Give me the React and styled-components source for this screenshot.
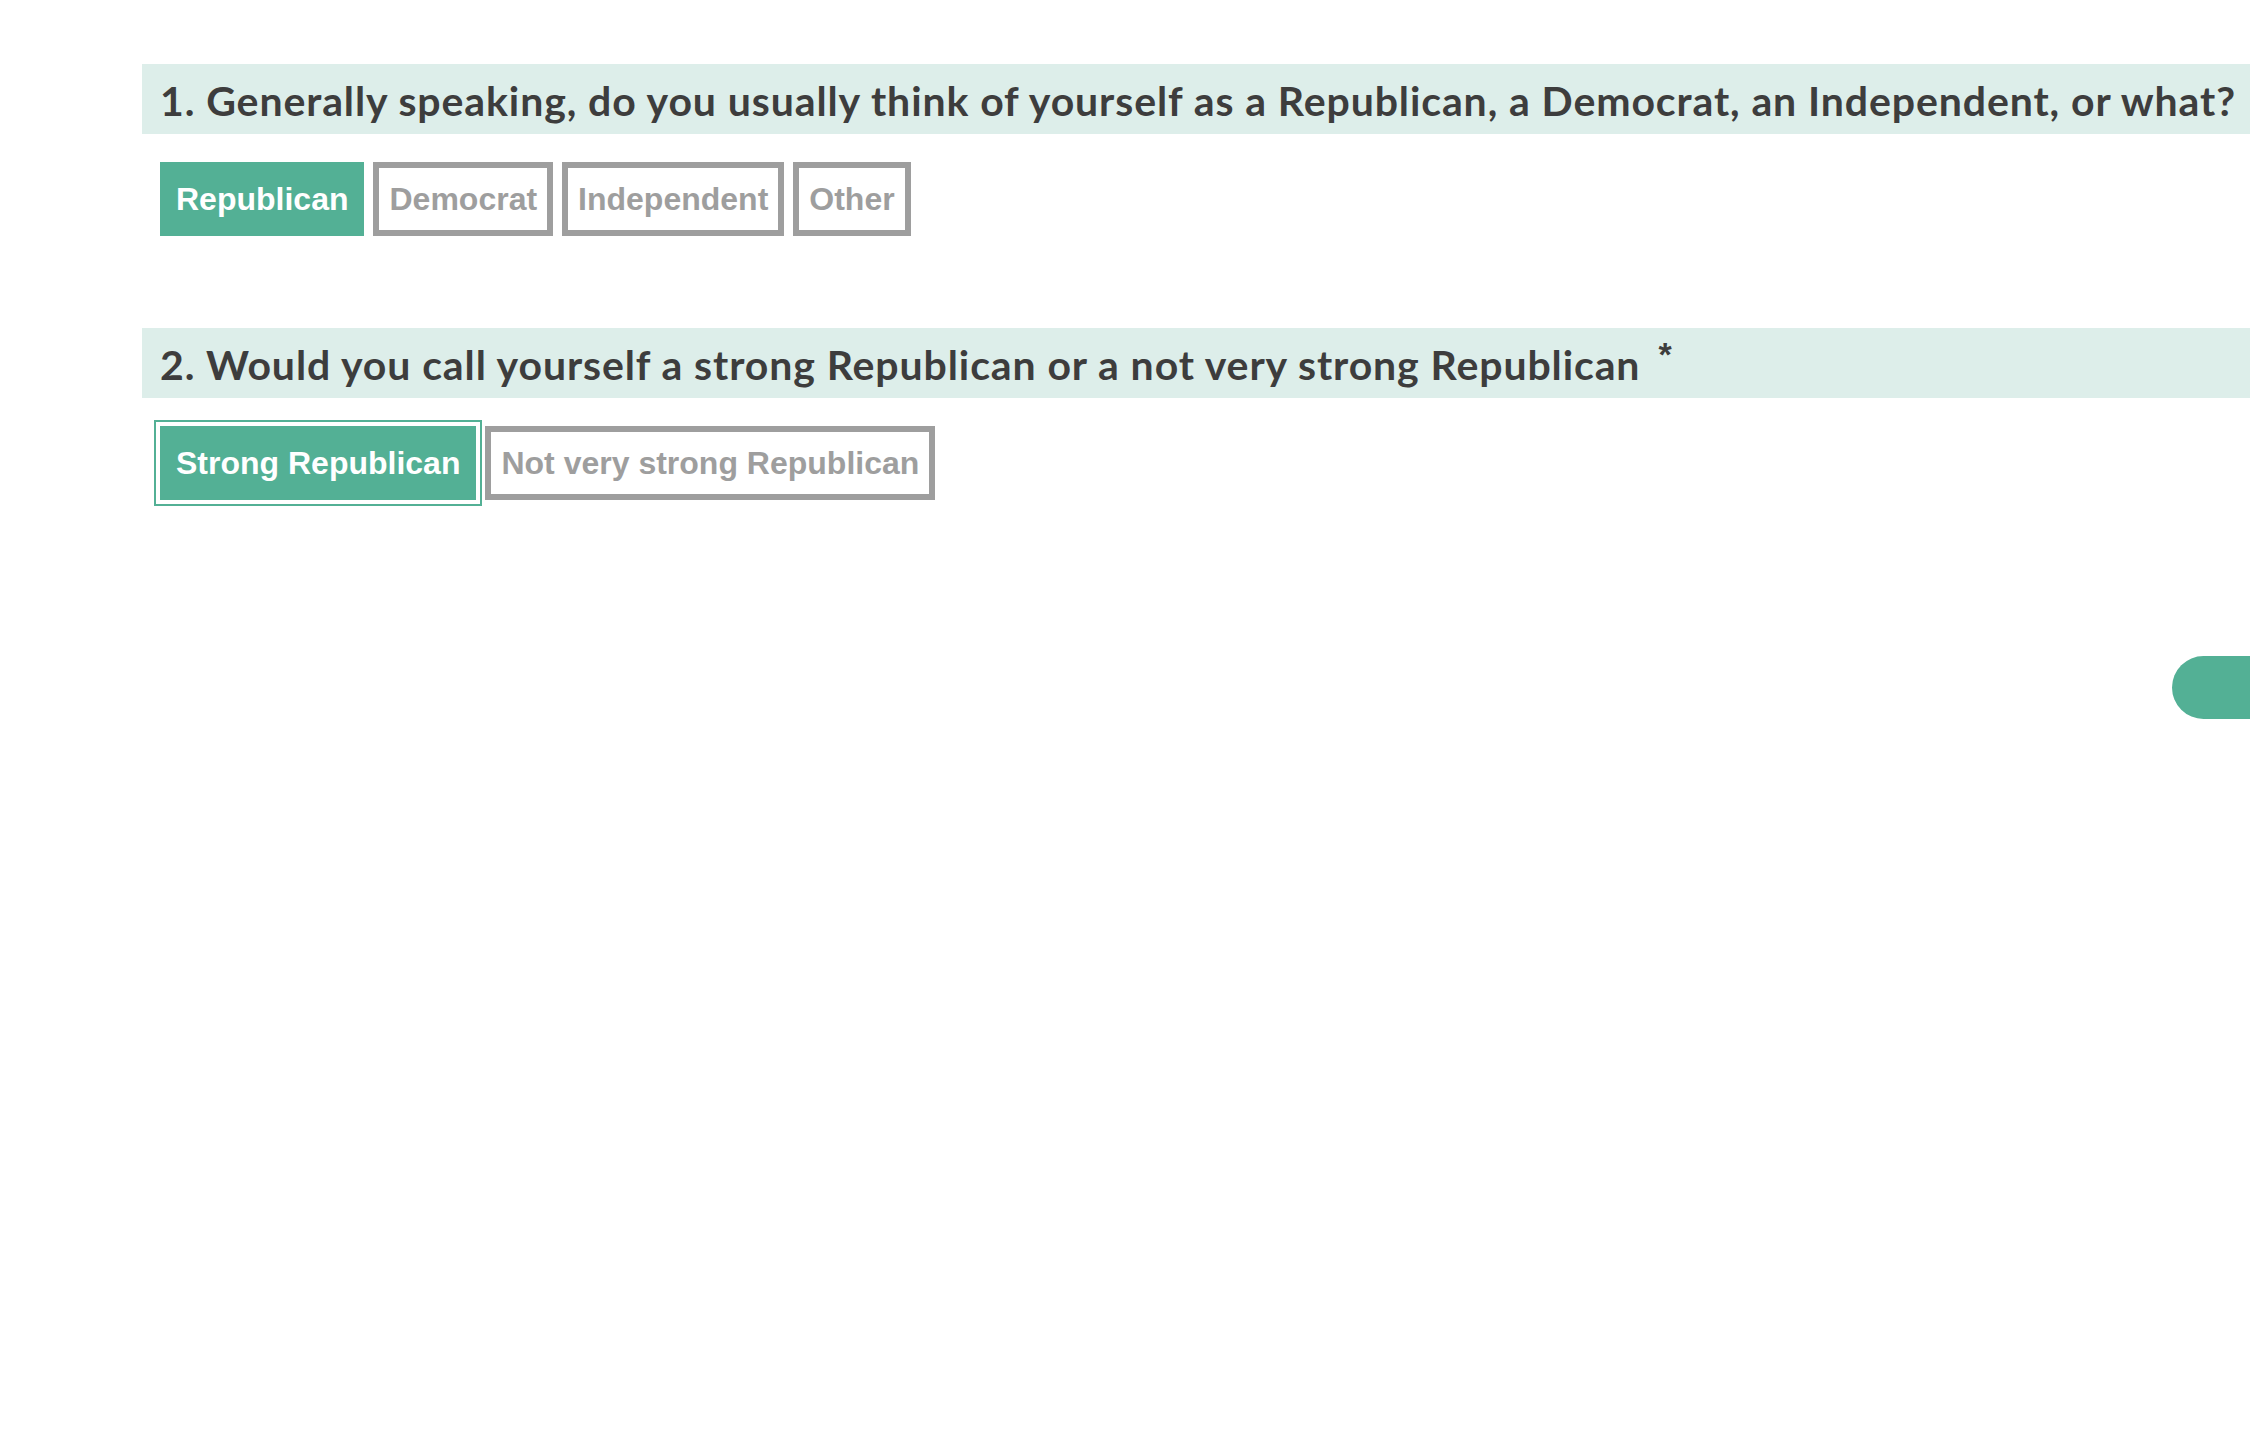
import React, { useState } from 'react';
import styled, { createGlobalStyle } from 'styled-components';

const GlobalStyle = createGlobalStyle`
    html, body {
        margin: 0;
        padding: 0;
        background: #ffffff;
        overflow: hidden;
    }
`;

const questions = [
    {
        id: 1,
        text: 'Generally speaking, do you usually think of yourself as a Republican, a Democrat, an Independent, or what?',
        options: ['Republican', 'Democrat', 'Independent', 'Other'],
        selected: 'Republican',
        required: false,
    },
    {
        id: 2,
        text: 'Would you call yourself a strong Republican or a not very strong Republican',
        options: ['Strong Republican', 'Not very strong Republican'],
        selected: 'Strong Republican',
        focused: 'Strong Republican',
        required: true,
    },
];

const App = () => {
    const [answers, setAnswers] = useState(
        questions.reduce((acc, q) => ({ ...acc, [q.id]: q.selected }), {})
    );

    return (
        <Page>
            <GlobalStyle />
            {questions.map((q) => (
                <Question key={q.id}>
                    <Header>
                        {q.id}. {q.text}
                        {q.required ? <Required>*</Required> : null}
                    </Header>
                    <Options>
                        {q.options.map((opt) => (
                            <Option
                                key={opt}
                                $active={answers[q.id] === opt}
                                $focused={q.focused === opt}
                                onClick={() => setAnswers({ ...answers, [q.id]: opt })}
                            >
                                {opt}
                            </Option>
                        ))}
                    </Options>
                </Question>
            ))}
            <NextTab />
        </Page>
    );
};

const Page = styled.div`
    padding: 64px 0 0 142px;
    min-height: 1376px;
`;

const Question = styled.div`
    & + & {
        margin-top: 92px;
    }
`;

const Header = styled.div`
    display: flex;
    align-items: center;
    height: 70px;
    padding: 2px 18px 0;
    background-color: #ddeeea;
    color: #3d3d3d;
    font-family: Lato, 'Open Sans', sans-serif;
    font-weight: 700;
    font-size: 41px;
    letter-spacing: 0.9px;
    white-space: nowrap;
    box-sizing: border-box;
`;

const Required = styled.span`
    align-self: flex-start;
    margin: 7px 0 0 18px;
    font-family: 'Liberation Sans', Arial, sans-serif;
    font-size: 34px;
    line-height: 1;
`;

const Options = styled.div`
    display: flex;
    gap: 9px;
    margin-top: 28px;
    padding-left: 18px;
`;

const Option = styled.button`
    height: 74px;
    padding: 0 10px;
    box-sizing: border-box;
    border: 6px solid ${(p) => (p.$active ? '#53b095' : '#9e9e9e')};
    background-color: ${(p) => (p.$active ? '#53b095' : '#ffffff')};
    color: ${(p) => (p.$active ? '#ffffff' : '#9e9e9e')};
    font-family: 'Liberation Sans', Arial, sans-serif;
    font-weight: 700;
    font-size: 32px;
    cursor: pointer;
    outline: ${(p) => (p.$focused ? '2px solid #53b095' : 'none')};
    outline-offset: 4px;
`;

const NextTab = styled.div`
    position: fixed;
    top: 656px;
    left: 2172px;
    width: 140px;
    height: 63px;
    border-radius: 32px;
    background-color: #53b095;
`;

export default App;
